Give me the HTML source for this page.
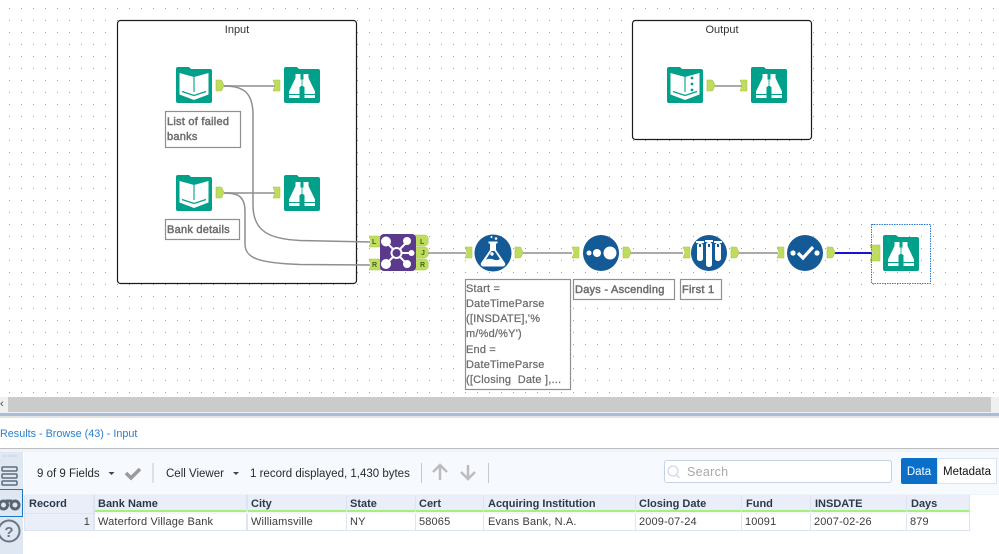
<!DOCTYPE html>
<html><head><meta charset="utf-8"><style>
html,body{margin:0;padding:0;background:#fff}
body{width:999px;height:554px;overflow:hidden;position:relative;font-family:"Liberation Sans",sans-serif}
svg{position:absolute;left:0;top:0}
.a{position:absolute;white-space:nowrap}
.th,.td{position:absolute;font-size:11px;color:#333;padding-left:3px;box-sizing:border-box;white-space:nowrap;overflow:hidden}
.th{top:495px;height:17px;background:#e9eef8;border-bottom:2px solid #a3f07e;font-weight:bold;color:#2b3a4a;line-height:18px}
.td{top:514px;height:16px;background:#fff;line-height:17px;color:#3c3c3c;letter-spacing:.15px}
</style></head><body>
<svg width="999" height="400" viewBox="0 0 999 400" xmlns="http://www.w3.org/2000/svg">
<defs>
<pattern id="g" x="9" y="8" width="12" height="12" patternUnits="userSpaceOnUse"><rect x="0" y="0" width="1" height="1" fill="#a2a2a2"/></pattern>
<g id="fold"><path d="M0 2a2 2 0 0 1 2-2h11l2 2h19a2 2 0 0 1 2 2v30a2 2 0 0 1-2 2H2a2 2 0 0 1-2-2z" fill="#00a08a"/></g>
<g id="book"><use href="#fold"/><path d="M3.500 6L18 10 32.500 6V27.500L18 33 3.500 27.500z" fill="#fff"/><path d="M18 10V25" stroke="#00a08a" stroke-width="1.100" fill="none"/><path d="M6 24.500L18 28.500 30 24.500" stroke="#00a08a" stroke-width="1.300" fill="none"/></g>
<g id="bino"><use href="#fold"/><path d="M11.500 7h5v13H15.500v11H5v-6.500L11.500 11zM24.500 7h-5v13H20.500v11H31v-6.500L24.500 11z" fill="#fff"/><rect x="16" y="12.500" width="4" height="6.500" fill="#fff"/><path d="M18 12.500V19" stroke="#00a08a" stroke-width=".8"/><path d="M5 27.500h10.500M20.500 27.500H31" stroke="#00a08a" stroke-width="1"/></g>
<g id="out"><path d="M0 0h4.500q1 0 1.500 1l2 4.500-2 4.500q-.5 1-1.500 1H0z" fill="#bfdc5c" stroke="#a6c24a" stroke-width=".6"/></g>
<g id="inp"><path d="M0 0h7v11H0l2-5.500z" fill="#bfdc5c" stroke="#a6c24a" stroke-width=".5"/></g>
</defs>
<rect width="999" height="400" fill="#fff"/>
<rect width="999" height="400" fill="url(#g)"/>

<rect x="117.500" y="20.500" width="239" height="263" rx="3" fill="#fff" stroke="#1a1a1a" stroke-width="1.200"/>
<rect x="632.500" y="20.500" width="179" height="119" rx="3" fill="#fff" stroke="#1a1a1a" stroke-width="1.200"/>

<!-- wires -->
<g fill="none" stroke="#8e8e8e" stroke-width="1.500">
<path d="M224 86H276" stroke="#aaa" stroke-width="2"/>
<path d="M224 193H276" stroke="#aaa" stroke-width="2"/>
<path d="M224 86C243 86 253 92 253 115V205C253 232 270 239 300 240.500L370 242"/>
<path d="M224 193C238 193 245 196 245 212V244C245 258 258 263 300 264.500L370 265"/>
<path d="M426 253H466" stroke="#aaa" stroke-width="2"/>
<path d="M522 253H572" stroke="#aaa" stroke-width="2"/>
<path d="M630 253H683" stroke="#aaa" stroke-width="2"/>
<path d="M738 253H778" stroke="#aaa" stroke-width="2"/>
<path d="M712 86H743" stroke="#aaa" stroke-width="2"/>
</g>
<path d="M833 253H872" stroke="#1414d2" stroke-width="2"/>

<!-- tools -->
<use href="#book" x="176" y="67"/>
<use href="#bino" x="284" y="67"/>
<use href="#book" x="176" y="175"/>
<use href="#bino" x="284" y="175"/>
<use href="#book" x="667" y="67"/>
<circle cx="692" cy="78" r="1.400" fill="#00a08a"/><circle cx="692" cy="84" r="1.400" fill="#00a08a"/><circle cx="692" cy="90" r="1.400" fill="#00a08a"/>
<use href="#bino" x="751" y="67"/>
<use href="#bino" x="883" y="235"/>

<!-- anchors -->
<use href="#out" x="216" y="80"/><use href="#inp" x="273" y="80"/>
<use href="#out" x="216" y="187"/><use href="#inp" x="273" y="187"/>
<use href="#out" x="707" y="80"/><use href="#inp" x="740" y="80"/>
<use href="#out" x="515" y="247"/><use href="#inp" x="465" y="247"/>
<use href="#inp" x="572" y="247"/><use href="#out" x="623" y="247"/>
<use href="#inp" x="683" y="247"/><use href="#out" x="731" y="247"/>
<use href="#inp" x="777" y="247"/><use href="#out" x="827" y="247"/>
<path d="M870 245h10v16h-10l3-8z" fill="#bfdc5c" stroke="#a6c24a" stroke-width=".5"/>
<rect x="871.500" y="224.500" width="59" height="59" fill="none" stroke="#2b7fd4" stroke-dasharray="1.500 1"/>

<!-- join -->
<g fill="#bfdc5c" stroke="#a6c24a" stroke-width=".5">
<path d="M369 236h12v11h-12l2-5.500z"/><path d="M369 259h12v11h-12l2-5.500z"/>
<path d="M415 235h9a4 4 0 0 1 4 5.500 4 4 0 0 1-4 5.500h-9z"/>
<path d="M415 247h9a4 4 0 0 1 4 5.500 4 4 0 0 1-4 5.500h-9z"/>
<path d="M415 259h9a4 4 0 0 1 4 5.500 4 4 0 0 1-4 5.500h-9z"/>
</g>
<rect x="380" y="234" width="36" height="37" rx="4" fill="#5b3a8e"/>
<g fill="none" stroke="#fff" stroke-width="2"><circle cx="396.500" cy="253" r="5"/><path d="M388 244l5 5M406 243l-6 6M388 262l5-5M406 263l-6-6M402 253h8"/></g>
<g fill="#fff"><circle cx="386" cy="241.500" r="5"/><circle cx="407" cy="241" r="4"/><circle cx="411.500" cy="253" r="3"/><circle cx="386" cy="264" r="5"/><circle cx="407" cy="264" r="4"/></g>
<g font-size="7" font-weight="bold" fill="#3c6a1e" font-family="Liberation Sans"><text x="372" y="244">L</text><text x="372" y="267">R</text><text x="420" y="244">L</text><text x="421" y="255">J</text><text x="420" y="267">R</text></g>

<!-- formula -->
<circle cx="493" cy="253" r="18.500" fill="#135a96"/>
<path d="M488.500 241.500h9v2h-1.500v6.500l9 13a2.500 2.500 0 0 1-2 3.500h-20a2.500 2.500 0 0 1-2-3.500l9-13v-6.500h-1.500z" fill="#fff"/>
<path d="M491.500 251l-5.500 8.500q4-1.500 7.500 0t6.500-.5l-5.500-8z" fill="#135a96"/>
<circle cx="492" cy="254" r="1.700" fill="#fff"/><circle cx="496" cy="238.500" r="1.300" fill="#fff"/><circle cx="491.500" cy="237" r="1" fill="#fff"/>
<!-- sort -->
<circle cx="601" cy="253" r="18" fill="#135a96"/>
<circle cx="589" cy="253" r="2.500" fill="#fff"/><circle cx="597" cy="253" r="4" fill="#fff"/><circle cx="610" cy="253" r="6.500" fill="#fff"/>
<!-- sample -->
<circle cx="709" cy="253" r="18" fill="#135a96"/>
<g fill="#fff"><rect x="697" y="243" width="6" height="18" rx="2.500"/><rect x="706" y="242" width="6" height="25" rx="2.500"/><rect x="715" y="243" width="6" height="18" rx="2.500"/><rect x="696" y="241" width="8" height="2"/><rect x="705" y="240" width="8" height="2"/><rect x="714" y="241" width="8" height="2"/></g>
<g fill="#135a96"><rect x="699" y="244" width="2" height="3"/><rect x="708" y="244" width="2" height="3"/><rect x="717" y="244" width="2" height="3"/></g>
<!-- unique -->
<circle cx="805" cy="253" r="18" fill="#135a96"/>
<circle cx="793" cy="253" r="2.600" fill="#fff"/><circle cx="817" cy="253" r="2.600" fill="#fff"/>
<path d="M798 253l5 5 10-11" fill="none" stroke="#fff" stroke-width="3.200"/>

<!-- annotations -->
<g fill="#fff" stroke="#8f8f8f" stroke-width="1.200">
<rect x="165.500" y="111.500" width="75" height="36"/>
<rect x="165.500" y="219.500" width="74" height="20"/>
<rect x="465.500" y="279.500" width="105" height="110"/>
<rect x="573.500" y="279.500" width="101" height="20"/>
<rect x="680.500" y="279.500" width="41" height="20"/>
</g>
<g font-family="Liberation Sans" font-size="11" fill="#6e6e6e" stroke="#6e6e6e" stroke-width=".5" style="letter-spacing:.25px">
<text x="167" y="125">List of failed</text><text x="167" y="140">banks</text>
<text x="167" y="233">Bank details</text>
<text x="575" y="293">Days - Ascending</text>
<text x="682" y="293">First 1</text>
</g>
<g font-family="Liberation Sans" font-size="11" fill="#6c6c6c" stroke="#6c6c6c" stroke-width=".25" style="letter-spacing:.2px">
<text x="466" y="292">Start =</text><text x="466" y="307">DateTimeParse</text><text x="466" y="322">([INSDATE],'%</text><text x="466" y="337">m/%d/%Y')</text><text x="466" y="353">End =</text><text x="466" y="368">DateTimeParse</text><text x="466" y="383" xml:space="preserve">([Closing  Date ],...</text>
</g>
<g font-family="Liberation Sans" font-size="11" fill="#333">
<text x="237" y="33" text-anchor="middle">Input</text>
<text x="722" y="33" text-anchor="middle">Output</text>
</g>
</svg>

<!-- scrollbar / splitter -->
<div class="a" style="left:0;top:397px;width:999px;height:15px;background:#f0f0f0"></div>
<div class="a" style="left:8px;top:397px;width:983px;height:15px;background:#cbcbcb"></div>
<div class="a" style="left:0;top:398px;font-size:11px;line-height:12px;color:#444">‹</div>
<div class="a" style="left:0;top:412px;width:999px;height:1px;background:#eee"></div>
<div class="a" style="left:0;top:413px;width:999px;height:3px;background:#a9bcd8"></div>
<div class="a" style="left:0;top:416px;width:999px;height:2px;background:#e4e4e4"></div>
<div class="a" style="left:0;top:427px;font-size:10.800px;line-height:14px;color:#2a7fc9">Results - Browse (43) - Input</div>
<div class="a" style="left:0;top:448px;width:999px;height:1px;background:#bdbdbd"></div>
<div class="a" style="left:0;top:449px;width:999px;height:3px;background:#eef2f9"></div>
<div class="a" style="left:24px;top:452px;width:975px;height:42px;background:#f6f9fe"></div>
<div class="a" style="left:0;top:452px;width:23px;height:102px;background:#dfe7f3"></div>
<div class="a" style="left:24px;top:494px;width:975px;height:1px;background:#eef2f9"></div>

<div class="a" style="left:37px;top:467px;font-size:11.500px;line-height:15px;color:#2a2a2a">9 of 9 Fields</div>
<div class="a" style="left:166px;top:467px;font-size:11.500px;line-height:15px;color:#2a2a2a">Cell Viewer</div>
<div class="a" style="left:250px;top:467px;font-size:11.500px;line-height:15px;color:#2a2a2a">1 record displayed, 1,430 bytes</div>
<div class="a" style="left:664px;top:460px;width:228px;height:23px;box-sizing:border-box;border:1px solid #c6d2e6;border-radius:3px;background:#fff"></div>
<div class="a" style="left:687px;top:465px;font-size:12.500px;line-height:15px;color:#a8a8a8;letter-spacing:.3px">Search</div>
<div class="a" style="left:901px;top:458px;width:36px;height:26px;background:#0b6fc9;border-radius:2px 0 0 2px;color:#fff;font-size:11.500px;line-height:28px;text-align:center">Data</div>
<div class="a" style="left:937px;top:458px;width:60px;height:26px;box-sizing:border-box;border:1px solid #dbe3f0;background:#fff;color:#111;font-size:11.500px;line-height:26px;text-align:center">Metadata</div>

<svg width="999" height="554" style="pointer-events:none" xmlns="http://www.w3.org/2000/svg">
<path d="M3 456h14" stroke="#a9b4c4" stroke-dasharray="1 1.500"/>
<g fill="#dfe7f3" stroke="#5d6b7c" stroke-width="1.500"><rect x="2" y="467" width="15" height="4" rx="1"/><rect x="2" y="474" width="15" height="4" rx="1"/><rect x="2" y="481" width="15" height="4" rx="1"/></g>
<rect x="-1" y="489.500" width="23.500" height="27" fill="#dfe7f3" stroke="#1a78c9"/>
<g fill="none" stroke="#5a6573" stroke-width="3"><circle cx="3.500" cy="505" r="4"/><circle cx="15" cy="505" r="4"/><path d="M6 501h6"/></g>
<circle cx="9" cy="531" r="10.500" fill="none" stroke="#6b7684" stroke-width="2"/>
<text x="9" y="537" font-size="15" font-weight="bold" fill="#6b7684" text-anchor="middle" font-family="Liberation Sans">?</text>
<path d="M108.500 472h6l-3 3z" fill="#444"/>
<path d="M126 473l5 5 9-9" fill="none" stroke="#9a9a9a" stroke-width="3.500"/>
<path d="M153 463v20M421.500 463v20M488.500 463v20" stroke="#c8c8c8"/>
<path d="M233 472h6l-3 3z" fill="#444"/>
<path d="M440 480v-14M433 472l7-7 7 7M468 465v14M461 472l7 7 7-7" fill="none" stroke="#bcbcbc" stroke-width="2.500"/>
<circle cx="673" cy="471" r="5" fill="none" stroke="#cfd8e8" stroke-width="1.300"/><path d="M676.500 475l3 3" stroke="#cfd8e8" stroke-width="1.300"/>
</svg>

<!-- table -->
<div class="a" style="left:24px;top:495px;width:946px;height:36px;background:#dde4f1"></div>
<div class="th" style="left:25px;width:68px;border-bottom:0;height:18px;padding-left:4px">Record</div>
<div class="th" style="left:95px;width:151px">Bank Name</div>
<div class="th" style="left:248px;width:98px">City</div>
<div class="th" style="left:347px;width:68px">State</div>
<div class="th" style="left:416px;width:67px">Cert</div>
<div class="th" style="left:484px;width:151px;padding-left:4px">Acquiring Institution</div>
<div class="th" style="left:636px;width:105px">Closing Date</div>
<div class="th" style="left:742px;width:68px;padding-left:4px">Fund</div>
<div class="th" style="left:811px;width:95px;padding-left:4px">INSDATE</div>
<div class="th" style="left:907px;width:62px;padding-left:4px">Days</div>
<div class="a" style="left:95px;top:512px;width:874px;height:2px;background:#f4f6fb"></div>
<div class="td" style="left:25px;width:68px;background:#e9eef8;text-align:right;padding-right:3px">1</div>
<div class="td" style="left:95px;width:151px">Waterford Village Bank</div>
<div class="td" style="left:248px;width:98px">Williamsville</div>
<div class="td" style="left:347px;width:68px">NY</div>
<div class="td" style="left:416px;width:67px">58065</div>
<div class="td" style="left:484px;width:151px;padding-left:4px">Evans Bank, N.A.</div>
<div class="td" style="left:636px;width:105px">2009-07-24</div>
<div class="td" style="left:742px;width:68px">10091</div>
<div class="td" style="left:811px;width:95px">2007-02-26</div>
<div class="td" style="left:907px;width:62px">879</div>
</body></html>
